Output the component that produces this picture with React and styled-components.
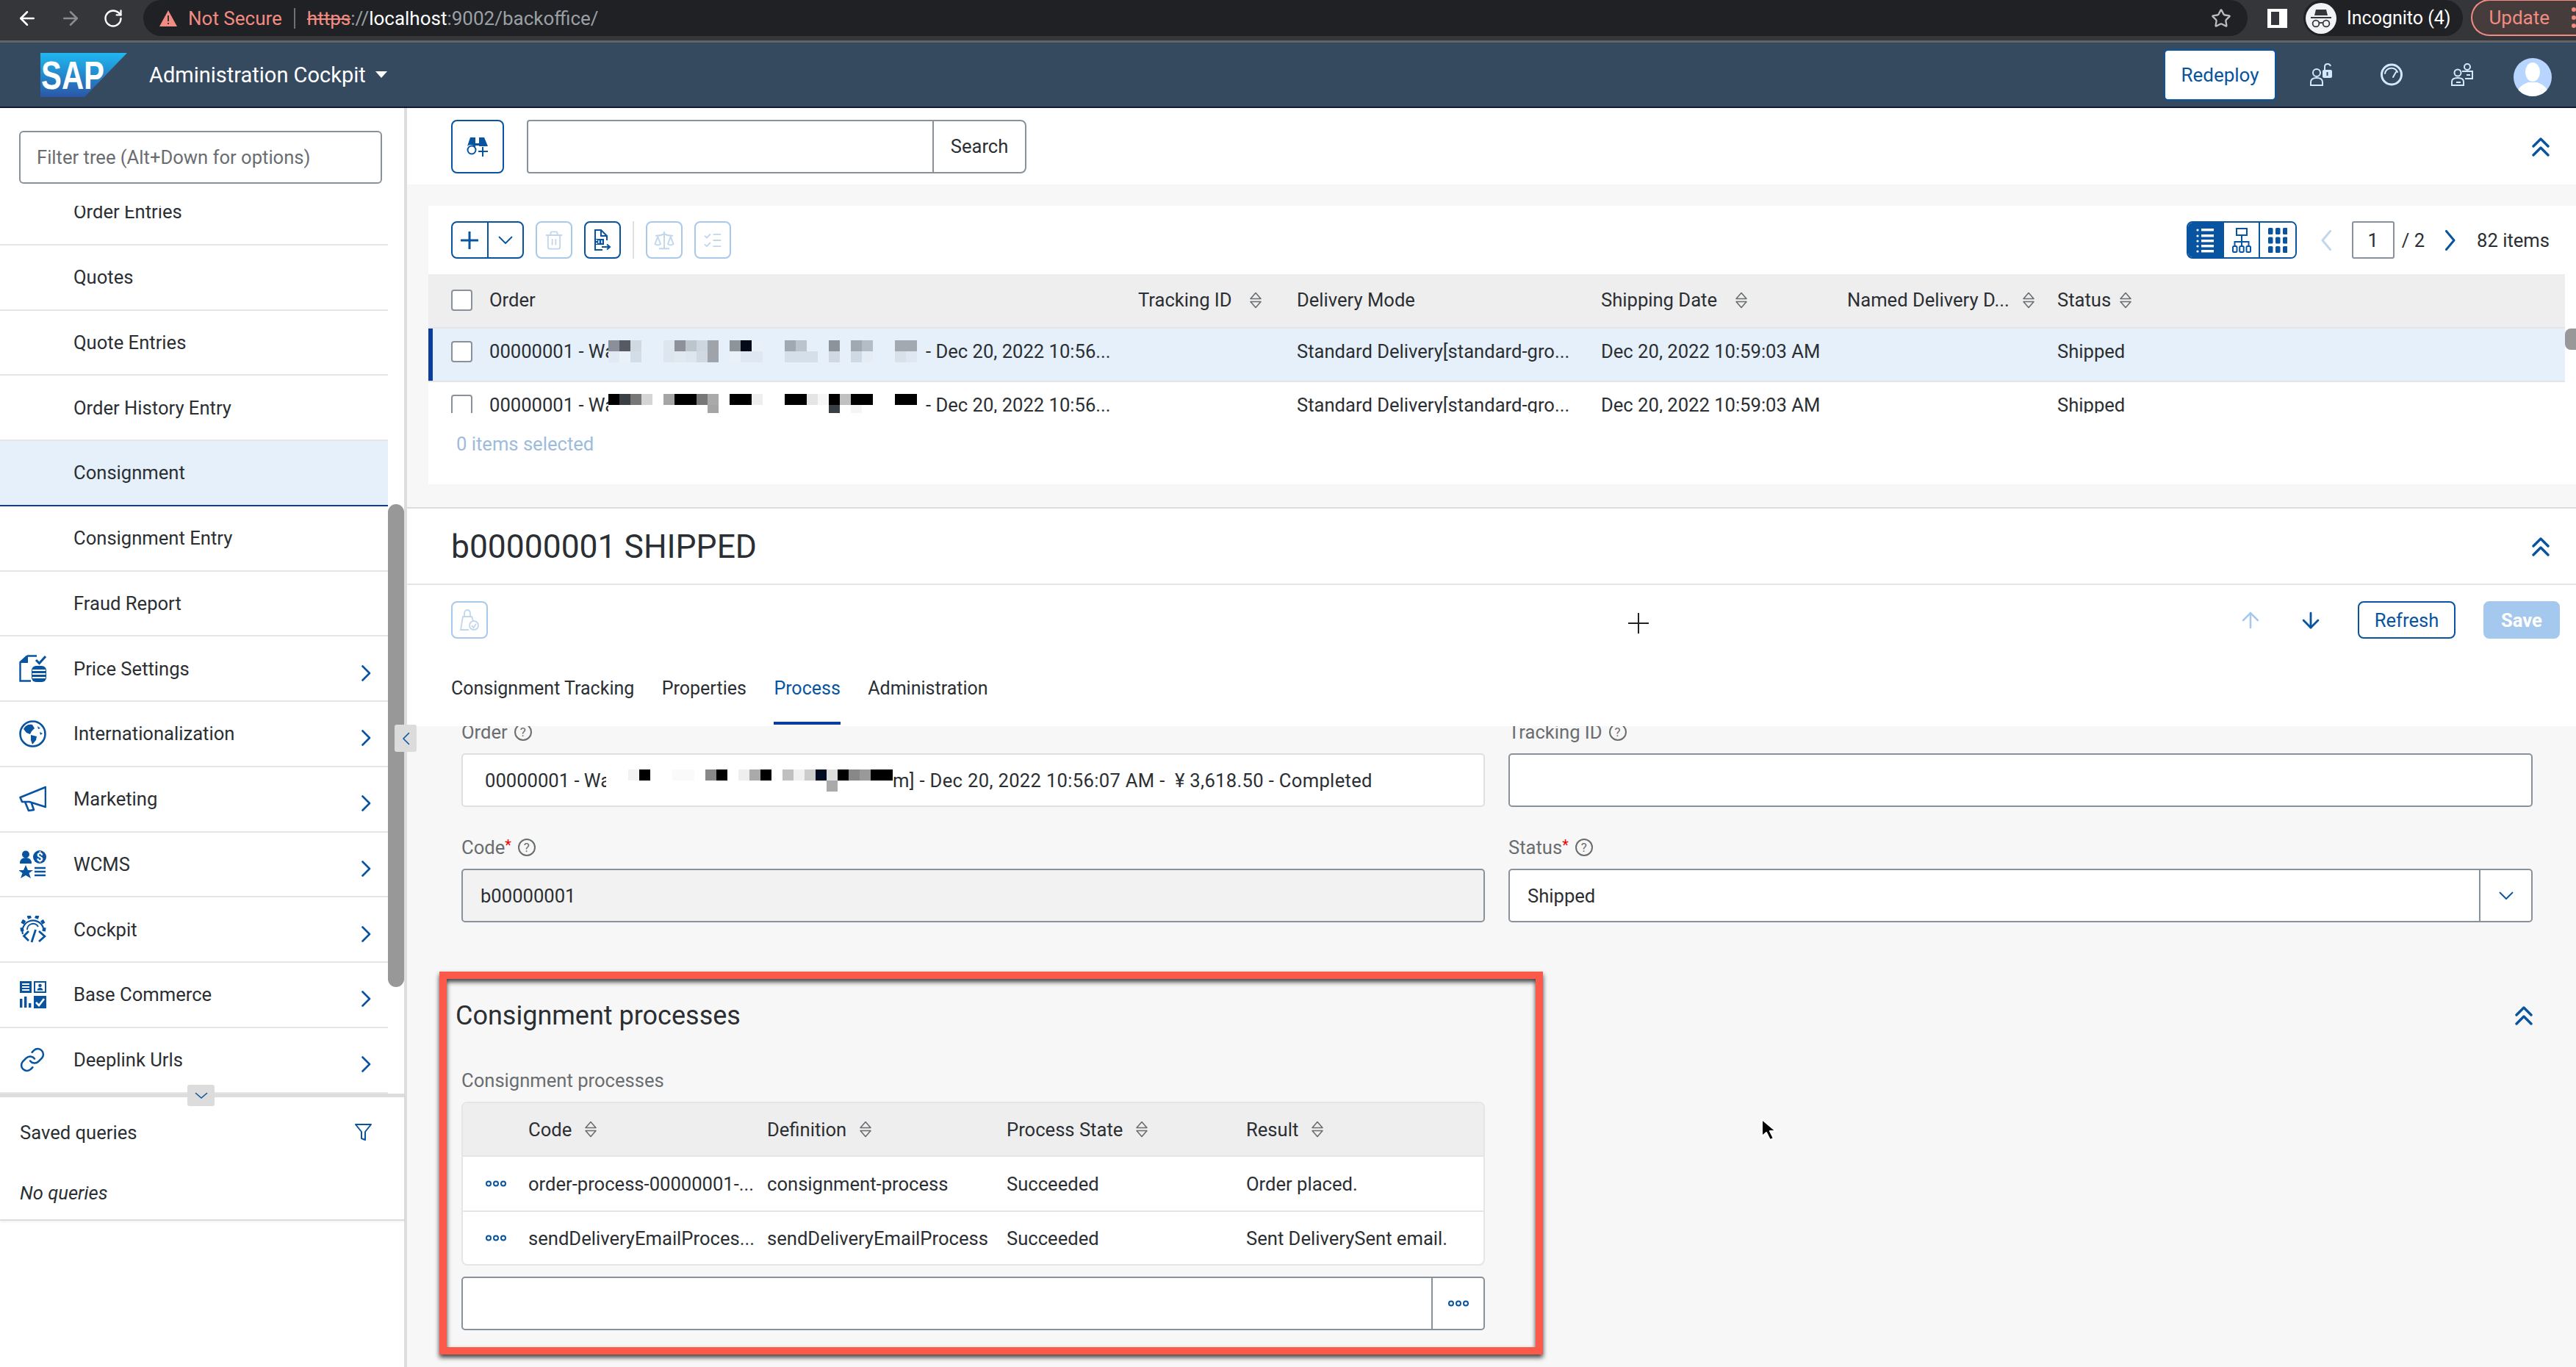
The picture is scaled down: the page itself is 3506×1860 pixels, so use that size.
import React from 'react'
import styled, { createGlobalStyle } from 'styled-components'
import { ArrowLeft, ArrowRight, RotateCw, Star, Trash2, Scale, ListChecks, Link as LinkIcon, ArrowUp, ArrowDown } from 'lucide-react'

const BLUE = '#0854a0'
const FADED = '#c3d7ec'
const TEXT = '#2b2f33'
const LINE = '#e5e5e5'
const FIELD = '#89919a'

const Global = createGlobalStyle`
  html, body { margin: 0; padding: 0; background: #fff; }
  * { box-sizing: border-box; }
  body { font-family: Roboto, "Liberation Sans", sans-serif; font-size: 25.6px; color: ${TEXT}; }
`

const Page = styled.div`
  position: relative;
  width: 3506px;
  height: 1860px;
  overflow: hidden;
  display: flex;
  flex-direction: column;
`

/* browser chrome */
const Browser = styled.div`
  height: 58px;
  flex: none;
  background: #35363a;
  border-bottom: 3px solid #626467;
  display: flex;
  align-items: flex-start;
  color: #fff;
  font-size: 26px;
`
const NavIcons = styled.div`
  width: 195px;
  height: 49px;
  flex: none;
  display: flex;
  align-items: center;
  gap: 29px;
  padding-left: 22px;
`
const Omnibox = styled.div`
  width: 2864px;
  height: 49px;
  flex: none;
  background: #202124;
  border-radius: 25px;
  display: flex;
  align-items: center;
  padding: 0 22px;
`
const NotSecure = styled.span`
  color: #f28b82;
  margin-left: 15px;
`
const UrlDivider = styled.span`
  width: 2px;
  height: 28px;
  background: #6f7175;
  margin: 0 16px;
`
const Url = styled.span`
  flex: 1;
  color: #fff;
  s { color: #f28b82; }
  i { font-style: normal; color: #9aa0a6; }
`
const PanelSlot = styled.span`
  display: flex;
  height: 49px;
  align-items: center;
  margin: 0 22px 0 27px;
`
const ProfilePill = styled.div`
  width: 221px;
  height: 49px;
  background: #202124;
  border-radius: 25px;
  display: flex;
  align-items: center;
  gap: 14px;
  padding-left: 3px;
  font-size: 25px;
`
const UpdatePill = styled.div`
  margin-left: 11px;
  flex: 1;
  height: 50px;
  margin-top: -1px;
  border: 2px solid #f28b82;
  border-right: none;
  border-radius: 25px 0 0 25px;
  background: #463c3c;
  color: #f28b82;
  padding-left: 22px;
  display: flex;
  align-items: center;
  gap: 30px;
`
const Dots = styled.span`
  width: 6px;
  height: 6px;
  border-radius: 50%;
  background: #f28b82;
  box-shadow: 0 -11px 0 #f28b82, 0 11px 0 #f28b82;
`

/* app header */
const Header = styled.header`
  height: 89px;
  flex: none;
  background: #354a5f;
  border-bottom: 2px solid #0c1a33;
  display: flex;
  align-items: center;
  padding-left: 55px;
`
const Brand = styled.div`
  flex: 1;
  display: flex;
  align-items: center;
  color: #fff;
  font-size: 29px;
  gap: 30px;
`
const BrandName = styled.span`
  display: flex;
  align-items: center;
  gap: 13px;
`
const Caret = styled.span`
  width: 0;
  height: 0;
  border-left: 8px solid transparent;
  border-right: 8px solid transparent;
  border-top: 9px solid #fff;
`
const HeaderActions = styled.div`
  display: flex;
  align-items: center;
  padding-right: 33px;
`
const Redeploy = styled.button`
  width: 153px;
  height: 70px;
  background: #fff;
  border: 2px solid ${BLUE};
  border-radius: 6px;
  color: ${BLUE};
  font: inherit;
  font-size: 26px;
  padding: 0;
  margin-right: 13px;
`
const HeaderIcon = styled.span`
  width: 96px;
  display: flex;
  justify-content: center;
`
const Avatar = styled.span`
  display: flex;
  margin: 6px 0 0 22px;
`

const Body = styled.div`
  flex: 1;
  display: flex;
  min-height: 0;
`

/* left tree */
const Sidebar = styled.aside`
  position: relative;
  z-index: 2;
  width: 554px;
  flex: none;
  background: #fff;
  border-right: 4px solid #ddd;
  display: flex;
  flex-direction: column;
`
const FilterArea = styled.div`
  height: 133px;
  flex: none;
  padding: 31px 0 0 26px;
`
const FilterInput = styled.div`
  width: 494px;
  height: 72px;
  border: 2px solid ${FIELD};
  border-radius: 6px;
  background: #fff;
  color: #6a6d70;
  display: flex;
  align-items: center;
  padding-left: 22px;
`
const TreeViewport = styled.div`
  height: 1208px;
  flex: none;
  overflow: hidden;
`
const TreeList = styled.div`
  margin-top: -35px;
  width: 528px;
`
const TreeRow = styled.div`
  height: 88.75px;
  display: flex;
  align-items: center;
  border-bottom: 2px solid ${p => p.$selected ? '#0a3d9e' : LINE};
  background: ${p => p.$selected ? '#e5f0fa' : '#fff'};
`
const TreeIcon = styled.span`
  width: 100px;
  padding-left: 26px;
  flex: none;
  display: flex;
`
const TreeLabel = styled.span`
  flex: 1;
`
const TreeChevron = styled.span`
  display: flex;
  margin: 12px 23px 0 0;
`
const Thumb = styled.div`
  position: absolute;
  left: 528px;
  top: 539px;
  width: 22px;
  height: 657px;
  border-radius: 11px;
  background: #989898;
`
const Handle = styled.div`
  position: absolute;
  left: ${p => p.$left}px;
  top: ${p => p.$top}px;
  width: ${p => p.$w}px;
  height: ${p => p.$h}px;
  background: #dcdcdc;
  border-radius: 3px;
  display: flex;
  align-items: center;
  justify-content: center;
`
const Saved = styled.div`
  border-top: 5px solid #ddd;
  border-bottom: 2px solid #ddd;
  height: 173px;
  flex: none;
  padding: 0 44px 0 27px;
  box-shadow: 0 2px 3px rgba(0,0,0,.06);
`
const SavedHead = styled.div`
  height: 95px;
  display: flex;
  align-items: center;
  justify-content: space-between;
`
const NoQueries = styled.div`
  font-style: italic;
  margin-top: 20px;
`

/* main column */
const Main = styled.main`
  flex: 1;
  min-width: 0;
  background: #f7f7f7;
  display: flex;
  flex-direction: column;
`
const SearchBar = styled.div`
  height: 104px;
  flex: none;
  background: #fff;
  display: flex;
  align-items: flex-start;
  padding: 16px 36px 0 60px;
`
const CollapseTop = styled.span`
  margin: 24px 0 0 auto;
  display: flex;
`
const IconButton = styled.button`
  width: ${p => p.$w || 50}px;
  height: ${p => p.$h || 51}px;
  flex: none;
  padding: 0;
  background: #fff;
  border: 2px solid ${p => p.$off ? '#a9c9ea' : BLUE};
  border-radius: 8px;
  display: flex;
  align-items: center;
  justify-content: center;
`
const SearchField = styled.div`
  width: 680px;
  height: 73px;
  margin-left: 31px;
  display: flex;
  border: 2px solid ${FIELD};
  border-radius: 4px 8px 8px 4px;
  background: #fff;
`
const SearchInput = styled.div`
  width: 552px;
  border-right: 2px solid ${FIELD};
`
const SearchLabel = styled.div`
  flex: 1;
  display: flex;
  align-items: center;
  justify-content: center;
  padding-bottom: 2px;
`

const ListPanel = styled.section`
  position: relative;
  height: 379px;
  flex: none;
  margin: 29px 0 31px 29px;
  background: #fff;
`
const ListToolbar = styled.div`
  height: 93px;
  padding: 21px 36px 0 31px;
  display: flex;
  align-items: flex-start;
  gap: 16px;
`
const SplitButton = styled.div`
  width: 99px;
  height: 51px;
  display: flex;
  border: 2px solid ${BLUE};
  border-radius: 8px;
`
const SplitPart = styled.span`
  flex: 1;
  display: flex;
  align-items: center;
  justify-content: center;
  & + & { border-left: 2px solid ${BLUE}; }
`
const ToolDivider = styled.span`
  width: 2px;
  height: 51px;
  background: #e0e0e0;
`
const Pager = styled.div`
  margin-left: auto;
  display: flex;
  align-items: center;
  height: 51px;
`
const ViewSwitch = styled.div`
  width: 150px;
  height: 51px;
  display: flex;
  border: 2px solid ${BLUE};
  border-radius: 8px;
  overflow: hidden;
  margin-right: 33px;
`
const ViewOption = styled.span`
  flex: 1;
  display: flex;
  align-items: center;
  justify-content: center;
  background: ${p => p.$active ? BLUE : '#fff'};
  & + & { border-left: 2px solid ${BLUE}; }
`
const PageInput = styled.span`
  width: 58px;
  height: 51px;
  border: 2px solid ${FIELD};
  border-radius: 3px;
  display: flex;
  align-items: center;
  justify-content: center;
  margin: 0 10px 0 28px;
`
const PageNext = styled.span`
  display: flex;
  margin: 0 29px 0 28px;
`
const ListGrid = styled.div`
  display: grid;
  grid-template-columns: 52px 883px 216px 414px 335px 286px 1fr;
  padding-left: 31px;
  margin-right: 15px;
  align-items: center;
  white-space: nowrap;
`
const ListHead = styled(ListGrid)`
  height: 74px;
  padding-bottom: 2px;
  background: #eee;
  border-bottom: 2px solid ${LINE};
`
const ListRows = styled.div`
  height: 115px;
  overflow: hidden;
`
const ListRow = styled(ListGrid)`
  height: 73px;
  padding-bottom: 9px;
  border-bottom: 2px solid ${LINE};
  background: ${p => p.$selected ? '#e5f0fa' : '#fff'};
  box-shadow: ${p => p.$selected ? 'inset 6px 0 0 #0a3d9e' : 'none'};
`
const Check = styled.span`
  width: 29px;
  height: 29px;
  border: 2px solid ${FIELD};
  border-radius: 4px;
  background: #fff;
  display: block;
`
const SortHead = styled.span`
  display: flex;
  align-items: center;
  gap: ${p => p.$gap || 22}px;
`
const MaskedCell = styled.span`
  display: flex;
  align-items: center;
  white-space: nowrap;
`
const MaskStart = styled.span`
  width: ${p => p.$w}px;
  margin-right: ${p => p.$after || 0}px;
  overflow: hidden;
  flex: none;
`
const MaskEnd = styled.span`
  margin-left: ${p => p.$gap}px;
  letter-spacing: ${p => p.$track || 0}px;
`
const Selected = styled.div`
  color: #9dbcdc;
  padding: 27px 0 0 38px;
`
const ListThumb = styled.div`
  position: absolute;
  right: 0;
  top: 167px;
  width: 15px;
  height: 29px;
  border-radius: 8px 0 0 8px;
  background: #989898;
`

/* editor */
const Editor = styled.section`
  border-top: 2px solid #ddd;
  background: #fff;
  flex: none;
`
const TitleRow = styled.div`
  height: 104px;
  border-bottom: 2px solid ${LINE};
  display: flex;
  align-items: center;
  justify-content: space-between;
  padding: 2px 36px 0 60px;
`
const Title = styled.h1`
  margin: 0;
  font-weight: 400;
  font-size: 44.4px;
`
const EditorBar = styled.div`
  height: 90px;
  padding: 22px 22px 0 60px;
  display: flex;
  align-items: flex-start;
`
const ArrowSlot = styled.span`
  margin-left: ${p => p.$ml}px;
  height: 51px;
  display: flex;
  align-items: center;
`
const TextButton = styled.button`
  width: ${p => p.$w}px;
  height: 51px;
  padding: 0;
  margin-left: ${p => p.$ml}px;
  font: inherit;
  border-radius: 8px;
  border: 2px solid ${p => p.$primary ? '#a5c8ee' : BLUE};
  background: ${p => p.$primary ? '#a5c8ee' : '#fff'};
  color: ${p => p.$primary ? '#fff' : BLUE};
  font-weight: ${p => p.$primary ? 700 : 400};
`
const Tabs = styled.div`
  height: 102px;
  padding-left: 60px;
  display: flex;
  gap: 37.5px;
  font-size: 25px;
`
const Tab = styled.span`
  height: 100px;
  padding-top: 4px;
  display: flex;
  align-items: center;
  color: ${p => p.$active ? BLUE : TEXT};
  border-bottom: 4px solid ${p => p.$active ? '#0a3d9e' : 'transparent'};
`

const FormArea = styled.div`
  flex: 1;
  min-height: 0;
  overflow: hidden;
  padding: 0 59px 0 74px;
`
const FieldGrid = styled.div`
  display: grid;
  grid-template-columns: 1393px 1394px;
  column-gap: 32px;
  row-gap: 40px;
  margin-top: -7px;
`
const FieldLabel = styled.div`
  height: 30px;
  line-height: 30px;
  color: #6a6d70;
  margin-bottom: 14px;
  display: flex;
  align-items: center;
  white-space: nowrap;
`
const Required = styled.sup`
  color: #e00;
  font-size: 20px;
  line-height: 0;
  align-self: flex-start;
  margin-top: 12px;
`
const Help = styled.span`
  width: 24px;
  height: 24px;
  margin-left: 9px;
  border: 2px solid #6a6d70;
  border-radius: 50%;
  font-size: 17px;
  line-height: 20px;
  text-align: center;
`
const Input = styled.div`
  height: 73px;
  display: flex;
  align-items: center;
  padding-left: ${p => p.$pad || 24}px;
  background: ${p => p.$readOnly ? '#f2f2f2' : '#fff'};
  border: 2px solid ${p => p.$soft ? '#dfdfdf' : FIELD};
  border-radius: 5px;
  white-space: nowrap;
  overflow: hidden;
`
const InputAddon = styled.span`
  margin-left: auto;
  width: ${p => p.$w}px;
  height: 100%;
  border-left: 2px solid ${FIELD};
  display: flex;
  align-items: center;
  justify-content: center;
`
const SectionHead = styled.div`
  margin: 102px 0 0 -8px;
  height: 50px;
  display: flex;
  align-items: center;
  justify-content: space-between;
`
const SectionTitle = styled.h2`
  margin: 0;
  font-weight: 400;
  font-size: 36px;
`
const SectionBody = styled.div`
  width: 1393px;
`
const SubLabel = styled.div`
  margin-top: 48px;
  height: 30px;
  line-height: 30px;
  color: #6a6d70;
`
const ProcessTable = styled.div`
  margin-top: 14px;
  border: 2px solid ${LINE};
  border-radius: 8px;
  overflow: hidden;
  background: #fff;
`
const ProcessGrid = styled.div`
  display: grid;
  grid-template-columns: 89px 325px 326px 326px 1fr;
  align-items: center;
  white-space: nowrap;
`
const ProcessHead = styled(ProcessGrid)`
  height: 73px;
  background: #eee;
  border-bottom: 2px solid ${LINE};
`
const ProcessRow = styled(ProcessGrid)`
  height: 73px;
  & + & { border-top: 2px solid ${LINE}; }
`
const RowDots = styled.span`
  display: flex;
  padding-left: 30px;
`
const PickerField = styled(Input)`
  margin-top: 15px;
`

/* things drawn over the page */
const Callout = styled.div`
  position: absolute;
  left: 598px;
  top: 1322px;
  width: 1502px;
  height: 521px;
  border: 10px solid #fb5a4b;
  filter: drop-shadow(0 4px 3px rgba(0,0,0,.75));
  pointer-events: none;
`
const Crosshair = styled.div`
  position: absolute;
  left: 2216px;
  top: 834px;
  display: flex;
`
const Pointer = styled.div`
  position: absolute;
  left: 2395px;
  top: 1521px;
  display: flex;
`

/* icons */
const Chevron = ({ dir = 'right', color = BLUE, w = 13, h = 22, sw = 2.6 }) => {
  const d = { right: `M1.5 1.5 L${w - 2} ${h / 2} L1.5 ${h - 1.5}`, left: `M${w - 1.5} 1.5 L2 ${h / 2} L${w - 1.5} ${h - 1.5}`, down: `M1.5 1.5 L${w / 2} ${h - 2} L${w - 1.5} 1.5` }[dir]
  return <svg width={w} height={h} viewBox={`0 0 ${w} ${h}`}><path d={d} fill="none" stroke={color} strokeWidth={sw} strokeLinecap="round" strokeLinejoin="round" /></svg>
}
const DoubleUp = () => (
  <svg width="24" height="26" viewBox="0 0 24 26"><path d="M2 12 L12 2 L22 12 M2 24 L12 14 L22 24" fill="none" stroke={BLUE} strokeWidth="3.4" strokeLinecap="round" strokeLinejoin="round" /></svg>
)
const SortIcon = () => (
  <svg width="20" height="23" viewBox="0 0 20 23"><path d="M10 1.5 L17 9.5 H3 Z M3 13.5 H17 L10 21.5 Z" fill="none" stroke="#6a6d70" strokeWidth="1.6" strokeLinejoin="round" /></svg>
)
const MoreDots = () => (
  <svg width="30" height="9" viewBox="0 0 30 9"><g fill="none" stroke={BLUE} strokeWidth="2"><circle cx="5" cy="4.5" r="3" /><circle cx="15" cy="4.5" r="3" /><circle cx="25" cy="4.5" r="3" /></g></svg>
)
const SapLogo = () => (
  <svg width="118" height="60" viewBox="0 0 118 60">
    <defs><linearGradient id="sapg" x1="0" y1="0" x2="0" y2="1"><stop offset="0" stopColor="#1fb8f0" /><stop offset="1" stopColor="#2a58a8" /></linearGradient></defs>
    <polygon points="0,0 118,0 60,60 0,60" fill="url(#sapg)" />
    <text x="1" y="49" fill="#fff" fontFamily="Liberation Sans" fontWeight="700" fontSize="53" textLength="86" lengthAdjust="spacingAndGlyphs">SAP</text>
  </svg>
)
const IncognitoIcon = () => (
  <svg width="42" height="42" viewBox="0 0 42 42">
    <circle cx="21" cy="21" r="21" fill="#f1f3f4" />
    <path d="M14 9 H28 L30 17 H12 Z M7 19 H35 V21 H7 Z" fill="#35363a" />
    <g fill="none" stroke="#35363a" strokeWidth="1.8"><circle cx="14" cy="28" r="4.4" /><circle cx="28" cy="28" r="4.4" /><path d="M18 27 H24" /></g>
  </svg>
)
const PanelIcon = () => (
  <svg width="27" height="26" viewBox="0 0 27 26"><rect width="27" height="26" fill="#fff" /><rect x="5" y="4" width="11" height="18" fill="#35363a" /></svg>
)
const Warn = () => (
  <svg width="24" height="22" viewBox="0 0 24 22"><path d="M12 0 L24 22 H0 Z" fill="#f28b82" /><path d="M11 7 H13 V15 H11 Z M11 17 H13 V19 H11 Z" fill="#35363a" /></svg>
)
const HEAD = '#d1e8ff'
const PersonLock = () => (
  <svg width="30" height="31" viewBox="0 0 30 31">
    <g fill="none" stroke={HEAD} strokeWidth="2"><circle cx="9" cy="13" r="5" /><path d="M1 30 V26 Q1 20 9 20 Q17 20 17 26 V30 Z" /><path d="M20 9 V5 Q20 1 24 1 Q27 1 28 4" /></g>
    <rect x="17" y="9" width="13" height="11" rx="2" fill={HEAD} /><rect x="22.5" y="12" width="2" height="5" fill="#354a5f" />
  </svg>
)
const HelpRing = () => (
  <svg width="30" height="31" viewBox="0 0 30 31">
    <circle cx="15" cy="15.5" r="13.5" fill="none" stroke={HEAD} strokeWidth="3" />
    <path d="M6 14 A9 9 0 0 1 23 12 M21 12 L17 19" fill="none" stroke={HEAD} strokeWidth="2" strokeLinecap="round" />
  </svg>
)
const PersonsIcon = () => (
  <svg width="30" height="31" viewBox="0 0 30 31">
    <g fill="none" stroke={HEAD} strokeWidth="2"><circle cx="9" cy="13" r="4.5" /><path d="M1 30 V25 Q1 20 9 20 Q17 20 17 25 V30 Z" /><circle cx="22" cy="5" r="4" /><path d="M15 11 H29 V21 H19" /></g>
    <rect x="7" y="25" width="6" height="2" fill={HEAD} /><rect x="21" y="15" width="5" height="2" fill={HEAD} />
  </svg>
)
const AvatarIcon = () => (
  <svg width="52" height="52" viewBox="0 0 52 52">
    <defs><clipPath id="avc"><circle cx="26" cy="26" r="26" /></clipPath></defs>
    <circle cx="26" cy="26" r="26" fill="#b7d5ff" />
    <g clipPath="url(#avc)" fill="#fff"><ellipse cx="26" cy="19" rx="10" ry="13" /><path d="M3 52 Q5 38 20 33 H32 Q47 38 49 52 Z" /></g>
  </svg>
)
const Binoculars = () => (
  <svg width="30" height="27" viewBox="0 0 30 27">
    <path d="M5 1 H12 V9 H17 V1 H24 L29 13 H17 V12 H12 V16 A6.5 6.5 0 0 0 1 13 Z" fill={BLUE} />
    <circle cx="7" cy="18" r="5.5" fill="none" stroke={BLUE} strokeWidth="2" />
    <path d="M22 14 V27 M16 20 H29" stroke={BLUE} strokeWidth="2" />
  </svg>
)
const PlusIcon = () => <svg width="24" height="24" viewBox="0 0 24 24"><path d="M12 0 V24 M0 12 H24" stroke={BLUE} strokeWidth="3" /></svg>
const ExportDoc = () => (
  <svg width="24" height="30" viewBox="0 0 24 30">
    <path d="M12 28 H2 V1 H10 L18 9 V15 M10 1 V9 H18" fill="none" stroke={BLUE} strokeWidth="2" />
    <rect x="1" y="13" width="13" height="8" fill={BLUE} />
    <path d="M3 15 H5 M3 19 H5 M7 15 V19 M11 15 V19" stroke="#fff" strokeWidth="1.5" />
    <path d="M11 24 H22 M18 20.5 L22 24 L18 27.5" fill="none" stroke={BLUE} strokeWidth="2" />
  </svg>
)
const BagCheck = () => (
  <svg width="26" height="30" viewBox="0 0 26 30">
    <g fill="none" stroke={FADED} strokeWidth="1.8"><path d="M12 28 H1 L4 10 H16 L18 16" /><path d="M6 10 V6 Q6 1 10 1 Q14 1 14 6 V10" /><circle cx="19" cy="22" r="6" /><path d="M16 22 L18.5 25 L22 20" /></g>
  </svg>
)
const ListViewIcon = () => (
  <svg width="24" height="34" viewBox="0 0 24 34"><g fill="#fff"><circle cx="2" cy="3" r="1.6" /><circle cx="2" cy="11" r="1.6" /><circle cx="2" cy="18" r="1.6" /><circle cx="2" cy="25" r="1.6" /><circle cx="2" cy="32" r="1.6" /><rect x="7" y="1" width="17" height="3.4" /><rect x="7" y="9" width="17" height="3.4" /><rect x="7" y="16" width="17" height="3.4" /><rect x="7" y="23" width="17" height="3.4" /><rect x="7" y="30" width="17" height="3.4" /></g></svg>
)
const TreeViewIcon = () => (
  <svg width="26" height="34" viewBox="0 0 26 34"><g fill="none" stroke={BLUE} strokeWidth="2"><rect x="6" y="1" width="14" height="9" /><path d="M13 10 V19 M3.5 25 V19 H22.5 V25 M13 19 V25" /><rect x="1" y="25" width="5.5" height="8" rx="1.5" /><rect x="10.2" y="25" width="5.5" height="8" rx="1.5" /><rect x="19.5" y="25" width="5.5" height="8" rx="1.5" /></g></svg>
)
const GridViewIcon = () => (
  <svg width="26" height="34" viewBox="0 0 26 34"><g fill={BLUE}>{[0, 12.5, 25].map(y => [0, 10, 20].map(x => <rect key={`${x}-${y}`} x={x} y={y} width="6.5" height="9" rx="1.5" />))}</g></svg>
)
const FunnelIcon = () => (
  <svg width="23" height="24" viewBox="0 0 23 24"><path d="M1 1 H22 L14 11 V22 L9 20 V11 Z" fill="none" stroke={BLUE} strokeWidth="2" strokeLinejoin="round" /></svg>
)
const PriceIcon = () => (
  <svg width="37" height="37" viewBox="0 0 37 37">
    <path d="M11 1.5 H24 M11 1.5 L1.5 10 V35.5 H16" fill="none" stroke={BLUE} strokeWidth="2.4" />
    <polygon points="1.5,11 12,11 12,1.5" fill={BLUE} />
    <path d="M23 7 L27.5 11.5 L36 2" fill="none" stroke={BLUE} strokeWidth="3" />
    <rect x="17" y="15" width="20" height="22" rx="6" fill={BLUE} />
    <path d="M18 21 H36 M18 26 H36 M18 31 H36" stroke="#fff" strokeWidth="1.8" />
  </svg>
)
const GlobeIcon = () => (
  <svg width="37" height="37" viewBox="0 0 37 37">
    <circle cx="18.5" cy="18.5" r="17" fill="none" stroke={BLUE} strokeWidth="2.6" />
    <path d="M6 12 C9 6 14 5 18 6 L21 11 L17 15 L15 19 L10 17 Z M16 20 L24 22 L23 27 L18 33 L16 27 Z M25 8 L29 11 L26 12 Z M28 16 L32 18 L29 20 Z" fill={BLUE} />
  </svg>
)
const MegaphoneIcon = () => (
  <svg width="37" height="37" viewBox="0 0 37 37">
    <path d="M36 2 V29 L14 22 H4 L1.5 16 Z M8 22 L13 34 L20 33 L17 24" fill="none" stroke={BLUE} strokeWidth="2.6" strokeLinejoin="round" />
  </svg>
)
const AudienceIcon = () => (
  <svg width="37" height="38" viewBox="0 0 37 38">
    <circle cx="9" cy="5.5" r="5" fill={BLUE} /><path d="M1 18 Q1 10 9 10 Q17 10 17 18 Z" fill={BLUE} />
    <circle cx="28" cy="9" r="9" fill={BLUE} />
    <text x="28" y="15" fill="#fff" fontSize="16" fontWeight="700" textAnchor="middle" fontFamily="Roboto">$</text>
    <polygon points="9,20 12,27 19,27 13.5,31 16,38 9,34 2,38 4.5,31 -1,27 6,27" fill={BLUE} />
    <path d="M21 24 H36 M21 29 H36 M21 34 H36" stroke={BLUE} strokeWidth="2.6" />
  </svg>
)
/* teeth around the upper part of the gear; the code brackets take the lower part */
const GEAR_TEETH = [-150, -110, -70, -30, 10, 170, 210]
const GearCodeIcon = () => (
  <svg width="37" height="37" viewBox="0 0 37 37">
    <g fill="none" stroke={BLUE}>
      <path d="M5 25 A14 14 0 1 1 33 17" strokeWidth="2.2" />
      <path d="M11 19 A8 8 0 0 1 26 15" strokeWidth="2" />
      {GEAR_TEETH.map(a => <path key={a} d="M32 16 H36.5" strokeWidth="5" transform={`rotate(${a} 19 16)`} />)}
      <path d="M13 21 L6.5 27.5 L13 34 M27 21 L35 28 L27 35 M22.5 19 L17 36" strokeWidth="2.8" />
    </g>
  </svg>
)
const CommerceIcon = () => (
  <svg width="37" height="37" viewBox="0 0 37 37">
    <rect x="1" y="0" width="16" height="16" fill={BLUE} /><path d="M4 4 H14 M4 8 H14 M4 12 H14" stroke="#fff" strokeWidth="2" />
    <rect x="21" y="1" width="15" height="14" fill="none" stroke={BLUE} strokeWidth="2" /><circle cx="28.5" cy="6" r="2.3" fill={BLUE} /><path d="M24.5 12.5 Q25 9 28.5 9 Q32 9 32.5 12.5 Z" fill={BLUE} />
    <rect x="1" y="24" width="3.4" height="12" fill={BLUE} /><rect x="7" y="21" width="3.4" height="15" fill={BLUE} /><rect x="13" y="30" width="3.4" height="6" fill={BLUE} />
    <rect x="20" y="20" width="17" height="17" fill={BLUE} /><path d="M23 29 L27 33 L34 24" fill="none" stroke="#fff" strokeWidth="2.6" />
  </svg>
)
const MousePointer = () => (
  <svg width="28" height="32" viewBox="0 0 28 32">
    <path d="M3 2 V25 L9 20 L14 30 L19 28 L14 18 H22 Z" fill="#000" stroke="#fff" strokeWidth="2" strokeLinejoin="round" />
  </svg>
)
const CrosshairIcon = () => <svg width="28" height="28" viewBox="0 0 28 28"><path d="M14 0 V28 M0 14 H28" stroke="#222" strokeWidth="2" /></svg>

/* mosaic that hides the customer name: one object per line, one colour per 15px cell */
const Mosaic = ({ lines, cols }) => (
  <svg width={cols * 15} height={lines.length * 15} viewBox={`0 0 ${cols * 15} ${lines.length * 15}`} shapeRendering="crispEdges">
    {lines.map((line, y) => Object.entries(line).map(([x, c]) => <rect key={`${x}-${y}`} x={x * 15} y={y * 15} width="15" height="15" fill={c} />))}
  </svg>
)
const MOSAIC_SELECTED = [
  { 0: '#8a9099', 1: '#555a63', 2: '#d0d8e2', 5: '#dde5ee', 6: '#8d929a', 7: '#bcc4ce', 8: '#cdd5de', 9: '#9ea4aa', 11: '#8d949a', 12: '#050a18', 13: '#e9f0f8', 16: '#a0a8b2', 17: '#bbc3cd', 20: '#8c939b', 22: '#a0a8b2', 23: '#b4bcc6', 26: '#a3a9b1', 27: '#a3a9b1' },
  { 0: '#e0e9f4', 1: '#eaf1f9', 2: '#d3dde8', 5: '#dde5ee', 6: '#e0e8f0', 7: '#dde5ee', 8: '#d0d8e2', 9: '#9ea4aa', 11: '#eaf1f9', 12: '#dfe8f2', 13: '#dfe8f2', 16: '#d5dfea', 17: '#d5dfea', 18: '#d5dfea', 20: '#d0d8e2', 22: '#cfd9e4', 23: '#e5ecf4', 26: '#d8e1ea', 27: '#dfe8f2' },
]
const MOSAIC_PLAIN = [
  { 0: '#000', 1: '#3a3f44', 2: '#777', 3: '#d5d5d5', 5: '#a5a5a5', 6: '#000', 7: '#000', 8: '#777', 9: '#aaa', 11: '#000', 12: '#000', 13: '#eee', 16: '#000', 17: '#000', 18: '#e5e5e5', 19: '#f7f7f7', 20: '#000', 21: '#c0c0c0', 22: '#000', 23: '#000', 26: '#000', 27: '#000' },
  { 9: '#a5a5a5', 20: '#3a3f44', 22: '#f5f5f5' },
]
const MOSAIC_ORDER = [
  { 0: '#f2f2f2', 1: '#000', 4: '#fafafa', 5: '#fafafa', 7: '#888', 8: '#000', 10: '#eee', 11: '#aaa', 12: '#000', 14: '#c0c0c0', 15: '#f0f0f0', 16: '#ccc', 17: '#010b20', 18: '#ddd', 19: '#000', 20: '#888', 21: '#999', 22: '#000', 23: '#000' },
  { 18: '#aaa' },
]

const TREE = [
  { label: 'Order Entries' },
  { label: 'Quotes' },
  { label: 'Quote Entries' },
  { label: 'Order History Entry' },
  { label: 'Consignment', selected: true },
  { label: 'Consignment Entry' },
  { label: 'Fraud Report' },
  { label: 'Price Settings', icon: <PriceIcon />, more: true },
  { label: 'Internationalization', icon: <GlobeIcon />, more: true },
  { label: 'Marketing', icon: <MegaphoneIcon />, more: true },
  { label: 'WCMS', icon: <AudienceIcon />, more: true },
  { label: 'Cockpit', icon: <GearCodeIcon />, more: true },
  { label: 'Base Commerce', icon: <CommerceIcon />, more: true },
  { label: 'Deeplink Urls', icon: <LinkIcon size={36} color={BLUE} strokeWidth={1.7} />, more: true },
]

const ORDER_ROWS = [
  { selected: true, mosaic: MOSAIC_SELECTED },
  { selected: false, mosaic: MOSAIC_PLAIN },
]

const PROCESSES = [
  ['order-process-00000001-...', 'consignment-process', 'Succeeded', 'Order placed.'],
  ['sendDeliveryEmailProces...', 'sendDeliveryEmailProcess', 'Succeeded', 'Sent DeliverySent email.'],
]

export default function App() {
  return (
    <Page>
      <Global />
      <Browser>
        <NavIcons>
          <ArrowLeft size={30} color="#fff" strokeWidth={2} />
          <ArrowRight size={30} color="#8a8c90" strokeWidth={2} />
          <RotateCw size={28} color="#fff" strokeWidth={2} />
        </NavIcons>
        <Omnibox>
          <Warn />
          <NotSecure>Not Secure</NotSecure>
          <UrlDivider />
          <Url><s>https</s><i>://</i>localhost<i>:9002/backoffice/</i></Url>
          <Star size={28} color="#b9bbbe" strokeWidth={2} />
        </Omnibox>
        <PanelSlot><PanelIcon /></PanelSlot>
        <ProfilePill>
          <IncognitoIcon />
          Incognito (4)
        </ProfilePill>
        <UpdatePill>Update <Dots /></UpdatePill>
      </Browser>

      <Header>
        <Brand>
          <SapLogo />
          <BrandName>Administration Cockpit <Caret /></BrandName>
        </Brand>
        <HeaderActions>
          <Redeploy>Redeploy</Redeploy>
          <HeaderIcon><PersonLock /></HeaderIcon>
          <HeaderIcon><HelpRing /></HeaderIcon>
          <HeaderIcon><PersonsIcon /></HeaderIcon>
          <Avatar><AvatarIcon /></Avatar>
        </HeaderActions>
      </Header>

      <Body>
        <Sidebar>
          <FilterArea>
            <FilterInput>Filter tree (Alt+Down for options)</FilterInput>
          </FilterArea>
          <TreeViewport>
            <TreeList>
              {TREE.map(row => (
                <TreeRow key={row.label} $selected={row.selected}>
                  <TreeIcon>{row.icon}</TreeIcon>
                  <TreeLabel>{row.label}</TreeLabel>
                  {row.more && <TreeChevron><Chevron /></TreeChevron>}
                </TreeRow>
              ))}
            </TreeList>
          </TreeViewport>
          <Saved>
            <SavedHead>Saved queries <FunnelIcon /></SavedHead>
            <NoQueries>No queries</NoQueries>
          </Saved>
          <Thumb />
          <Handle $left={537} $top={839} $w={30} $h={37}><Chevron dir="left" w={11} h={18} sw={1.6} /></Handle>
          <Handle $left={255} $top={1329} $w={37} $h={29}><Chevron dir="down" w={18} h={10} sw={1.6} /></Handle>
        </Sidebar>

        <Main>
          <SearchBar>
            <IconButton $w={72} $h={73}><Binoculars /></IconButton>
            <SearchField>
              <SearchInput />
              <SearchLabel>Search</SearchLabel>
            </SearchField>
            <CollapseTop><DoubleUp /></CollapseTop>
          </SearchBar>

          <ListPanel>
            <ListToolbar>
              <SplitButton>
                <SplitPart><PlusIcon /></SplitPart>
                <SplitPart><Chevron dir="down" w={20} h={12} sw={1.8} /></SplitPart>
              </SplitButton>
              <IconButton $off><Trash2 size={28} color={FADED} strokeWidth={1.6} /></IconButton>
              <IconButton><ExportDoc /></IconButton>
              <ToolDivider />
              <IconButton $off><Scale size={30} color={FADED} strokeWidth={1.6} /></IconButton>
              <IconButton $off><ListChecks size={28} color={FADED} strokeWidth={1.6} /></IconButton>
              <Pager>
                <ViewSwitch>
                  <ViewOption $active><ListViewIcon /></ViewOption>
                  <ViewOption><TreeViewIcon /></ViewOption>
                  <ViewOption><GridViewIcon /></ViewOption>
                </ViewSwitch>
                <Chevron dir="left" color={FADED} w={14} h={28} sw={3} />
                <PageInput>1</PageInput>
                / 2
                <PageNext><Chevron w={14} h={28} sw={3} /></PageNext>
                82 items
              </Pager>
            </ListToolbar>
            <ListHead>
              <Check />
              <span>Order</span>
              <SortHead>Tracking ID <SortIcon /></SortHead>
              <span>Delivery Mode</span>
              <SortHead $gap={23}>Shipping Date <SortIcon /></SortHead>
              <SortHead $gap={16}>Named Delivery D... <SortIcon /></SortHead>
              <SortHead $gap={10}>Status <SortIcon /></SortHead>
            </ListHead>
            <ListRows>
              {ORDER_ROWS.map((row, i) => (
                <ListRow key={i} $selected={row.selected}>
                  <Check />
                  <MaskedCell>
                    <MaskStart $w={162}>00000001 - Wan</MaskStart>
                    <Mosaic lines={row.mosaic} cols={28} />
                    <MaskEnd $gap={12}>- Dec 20, 2022 10:56...</MaskEnd>
                  </MaskedCell>
                  <span />
                  <span>Standard Delivery[standard-gro...</span>
                  <span>Dec 20, 2022 10:59:03 AM</span>
                  <span />
                  <span>Shipped</span>
                </ListRow>
              ))}
            </ListRows>
            <Selected>0 items selected</Selected>
            <ListThumb />
          </ListPanel>

          <Editor>
            <TitleRow>
              <Title>b00000001 SHIPPED</Title>
              <DoubleUp />
            </TitleRow>
            <EditorBar>
              <IconButton $off><BagCheck /></IconButton>
              <ArrowSlot $ml={2382}><ArrowUp size={34} color="#a5c8ee" strokeWidth={1.8} /></ArrowSlot>
              <ArrowSlot $ml={48}><ArrowDown size={34} color={BLUE} strokeWidth={2} /></ArrowSlot>
              <TextButton $w={133} $ml={47}>Refresh</TextButton>
              <TextButton $w={104} $ml={38} $primary>Save</TextButton>
            </EditorBar>
            <Tabs>
              <Tab>Consignment Tracking</Tab>
              <Tab>Properties</Tab>
              <Tab $active>Process</Tab>
              <Tab>Administration</Tab>
            </Tabs>
          </Editor>

          <FormArea>
            <FieldGrid>
              <div>
                <FieldLabel>Order <Help>?</Help></FieldLabel>
                <Input $soft $pad={30}>
                  <MaskStart $w={165} $after={30}>00000001 - Wan</MaskStart>
                  <Mosaic lines={MOSAIC_ORDER} cols={24} />
                  <MaskEnd $gap={0} $track={0.32}>m] - Dec 20, 2022 10:56:07 AM -&nbsp; ¥ 3,618.50 - Completed</MaskEnd>
                </Input>
              </div>
              <div>
                <FieldLabel>Tracking ID <Help>?</Help></FieldLabel>
                <Input />
              </div>
              <div>
                <FieldLabel>Code<Required>*</Required> <Help>?</Help></FieldLabel>
                <Input $readOnly>b00000001</Input>
              </div>
              <div>
                <FieldLabel>Status<Required>*</Required> <Help>?</Help></FieldLabel>
                <Input>
                  Shipped
                  <InputAddon $w={71}><Chevron dir="down" w={20} h={12} sw={1.8} /></InputAddon>
                </Input>
              </div>
            </FieldGrid>

            <SectionHead>
              <SectionTitle>Consignment processes</SectionTitle>
              <DoubleUp />
            </SectionHead>
            <SectionBody>
              <SubLabel>Consignment processes</SubLabel>
              <ProcessTable>
                <ProcessHead>
                  <span />
                  <SortHead $gap={16}>Code <SortIcon /></SortHead>
                  <SortHead $gap={16}>Definition <SortIcon /></SortHead>
                  <SortHead $gap={16}>Process State <SortIcon /></SortHead>
                  <SortHead $gap={16}>Result <SortIcon /></SortHead>
                </ProcessHead>
                {PROCESSES.map(cells => (
                  <ProcessRow key={cells[0]}>
                    <RowDots><MoreDots /></RowDots>
                    {cells.map((c, i) => <span key={i}>{c}</span>)}
                  </ProcessRow>
                ))}
              </ProcessTable>
              <PickerField>
                <InputAddon $w={71}><MoreDots /></InputAddon>
              </PickerField>
            </SectionBody>
          </FormArea>
        </Main>
      </Body>

      <Callout />
      <Crosshair><CrosshairIcon /></Crosshair>
      <Pointer><MousePointer /></Pointer>
    </Page>
  )
}
